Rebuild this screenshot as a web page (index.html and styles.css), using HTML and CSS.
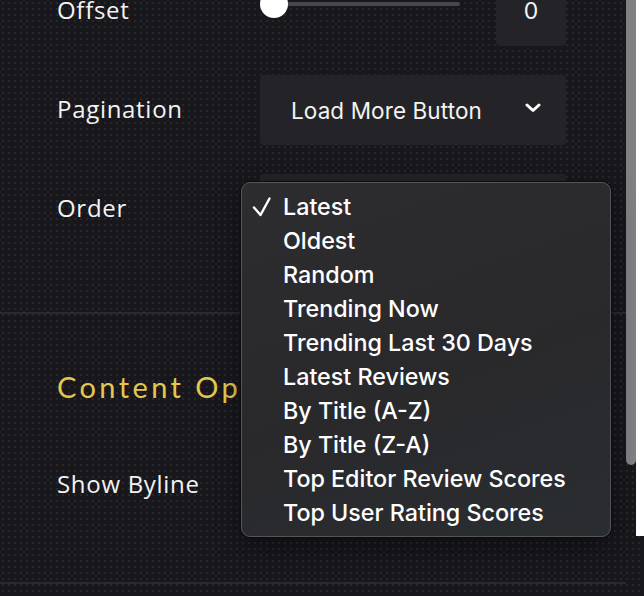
FILE: index.html
```html
<!DOCTYPE html>
<html lang="en">
<head>
<meta charset="utf-8">
<title>Settings</title>
<link rel="stylesheet" href="styles.css">
</head>
<body>
<div class="window">
  <main class="main">
    <section class="section section-top">
      <div class="row">
        <div class="label">Offset</div>
        <div class="control control-offset">
          <div class="slider">
            <div class="track"></div>
            <div class="thumb"></div>
          </div>
          <div class="number">0</div>
        </div>
      </div>
      <div class="row">
        <div class="label">Pagination</div>
        <div class="control">
          <div class="select">
            <span>Load More Button</span>
            <svg class="chev" width="16" height="10" viewBox="0 0 16 10"><polyline points="2,2 8,7.5 14,2" fill="none" stroke="#fff" stroke-width="3" stroke-linecap="round" stroke-linejoin="round"/></svg>
          </div>
        </div>
      </div>
      <div class="row">
        <div class="label">Order</div>
        <div class="control">
          <div class="select">
            <span>Latest</span>
            <svg class="chev" width="16" height="10" viewBox="0 0 16 10"><polyline points="2,2 8,7.5 14,2" fill="none" stroke="#fff" stroke-width="3" stroke-linecap="round" stroke-linejoin="round"/></svg>
          </div>
        </div>
      </div>
    </section>
    <section class="section section-content">
      <h2 class="heading">Content Options</h2>
      <div class="row">
        <div class="label">Show Byline</div>
        <div class="control">
          <div class="toggle"></div>
        </div>
      </div>
    </section>

    <ul class="menu">
      <li class="item checked">
        <svg class="check" width="22" height="22" viewBox="0 0 22 22"><polyline points="3,12.5 9.5,20 18.5,3.5" fill="none" stroke="#fff" stroke-width="2.4" stroke-linecap="round" stroke-linejoin="round"/></svg>
        Latest</li>
      <li class="item">Oldest</li>
      <li class="item">Random</li>
      <li class="item">Trending Now</li>
      <li class="item">Trending Last 30 Days</li>
      <li class="item">Latest Reviews</li>
      <li class="item">By Title (A-Z)</li>
      <li class="item">By Title (Z-A)</li>
      <li class="item">Top Editor Review Scores</li>
      <li class="item">Top User Rating Scores</li>
    </ul>
  </main>
  <aside class="scrollbar">
    <div class="sb-thumb"></div>
    <div class="sb-edge"></div>
  </aside>
</div>
</body>
</html>
```

FILE: styles.css
```css
* { box-sizing: border-box; }

html, body {
  margin: 0;
  padding: 0;
  height: 596px;
  overflow: hidden;
}

body {
  background-color: #18171c;
  background-image: radial-gradient(circle, rgba(255,255,255,0.07) 0.7px, transparent 1.1px);
  background-size: 6px 6px;
  color: #f2f2f2;
  font-family: "Open Sans", "Noto Sans", sans-serif;
}

.window {
  display: flex;
  height: 596px;
}

.main {
  position: relative;
  width: 626px;
  flex: none;
}

.section {
  padding-left: 57px;
  padding-right: 60px;
  border-bottom: 2px solid #2a2a2f;
}

.section-top {
  margin-top: -24px;
  padding-bottom: 68px;
  display: flex;
  flex-direction: column;
  gap: 29px;
}

.row {
  display: grid;
  grid-template-columns: 203px 306px;
  align-items: center;
  height: 70px;
}

.label {
  font-size: 24px;
  letter-spacing: 0.7px;
  color: #f3f3f3;
  padding-bottom: 3px;
}

.control {
  height: 70px;
}

.control-offset {
  display: flex;
  align-items: center;
  justify-content: space-between;
}

.slider {
  position: relative;
  width: 200px;
  height: 28px;
  margin-bottom: 10px;
}

.track {
  position: absolute;
  left: 0;
  right: 0;
  top: 10px;
  height: 4px;
  border-radius: 2px;
  background: #46464b;
}

.thumb {
  position: absolute;
  left: 0;
  top: -2px;
  width: 28px;
  height: 28px;
  border-radius: 50%;
  background: #ffffff;
}

.number {
  width: 70px;
  height: 70px;
  border-radius: 4px;
  background: #242428;
  display: flex;
  align-items: center;
  justify-content: center;
  font-family: Inter, "Noto Sans", sans-serif;
  font-size: 23px;
  color: #f3f3f3;
}

.select {
  height: 70px;
  border-radius: 4px;
  background: #242428;
  display: flex;
  align-items: center;
  justify-content: space-between;
  padding: 0 25px 0 31px;
  font-family: Inter, "Noto Sans", sans-serif;
  font-size: 22.5px;
  letter-spacing: 0.1px;
  color: #f3f3f3;
}

.chev {
  margin-top: -4px;
}

.section-content {
  padding-top: 56px;
  padding-bottom: 62px;
}

.heading {
  margin: 0 0 46px 0;
  font-family: Lato, sans-serif;
  font-weight: 400;
  font-size: 29px;
  line-height: 34px;
  letter-spacing: 3.4px;
  color: #e4c84e;
}

.toggle {
  width: 60px;
  height: 30px;
}

.menu {
  position: absolute;
  left: 241px;
  top: 182px;
  width: 370px;
  margin: 0;
  padding: 6px 0 7px 0;
  list-style: none;
  border: 1px solid #56565b;
  border-radius: 9px;
  background: linear-gradient(160deg, #2d2d30 0%, #29292c 55%, #2a2d30 100%);
  box-shadow: 0 0 0 1px #0b0b0d, 0 8px 24px rgba(0,0,0,0.45);
  font-family: Inter, "Noto Sans", sans-serif;
  font-size: 23.3px;
  font-weight: 500;
  color: #ffffff;
}

.item {
  position: relative;
  height: 34px;
  line-height: 35px;
  padding-left: 41px;
  white-space: nowrap;
}

.check {
  position: absolute;
  left: 9px;
  top: 6px;
}

.scrollbar {
  width: 18px;
  flex: none;
  display: flex;
  align-items: flex-start;
}

.sb-thumb {
  width: 10px;
  height: 465px;
  background: #808084;
  border-radius: 0 0 5px 5px;
}

.sb-edge {
  width: 8px;
  height: 536px;
  background: #ffffff;
}
```
